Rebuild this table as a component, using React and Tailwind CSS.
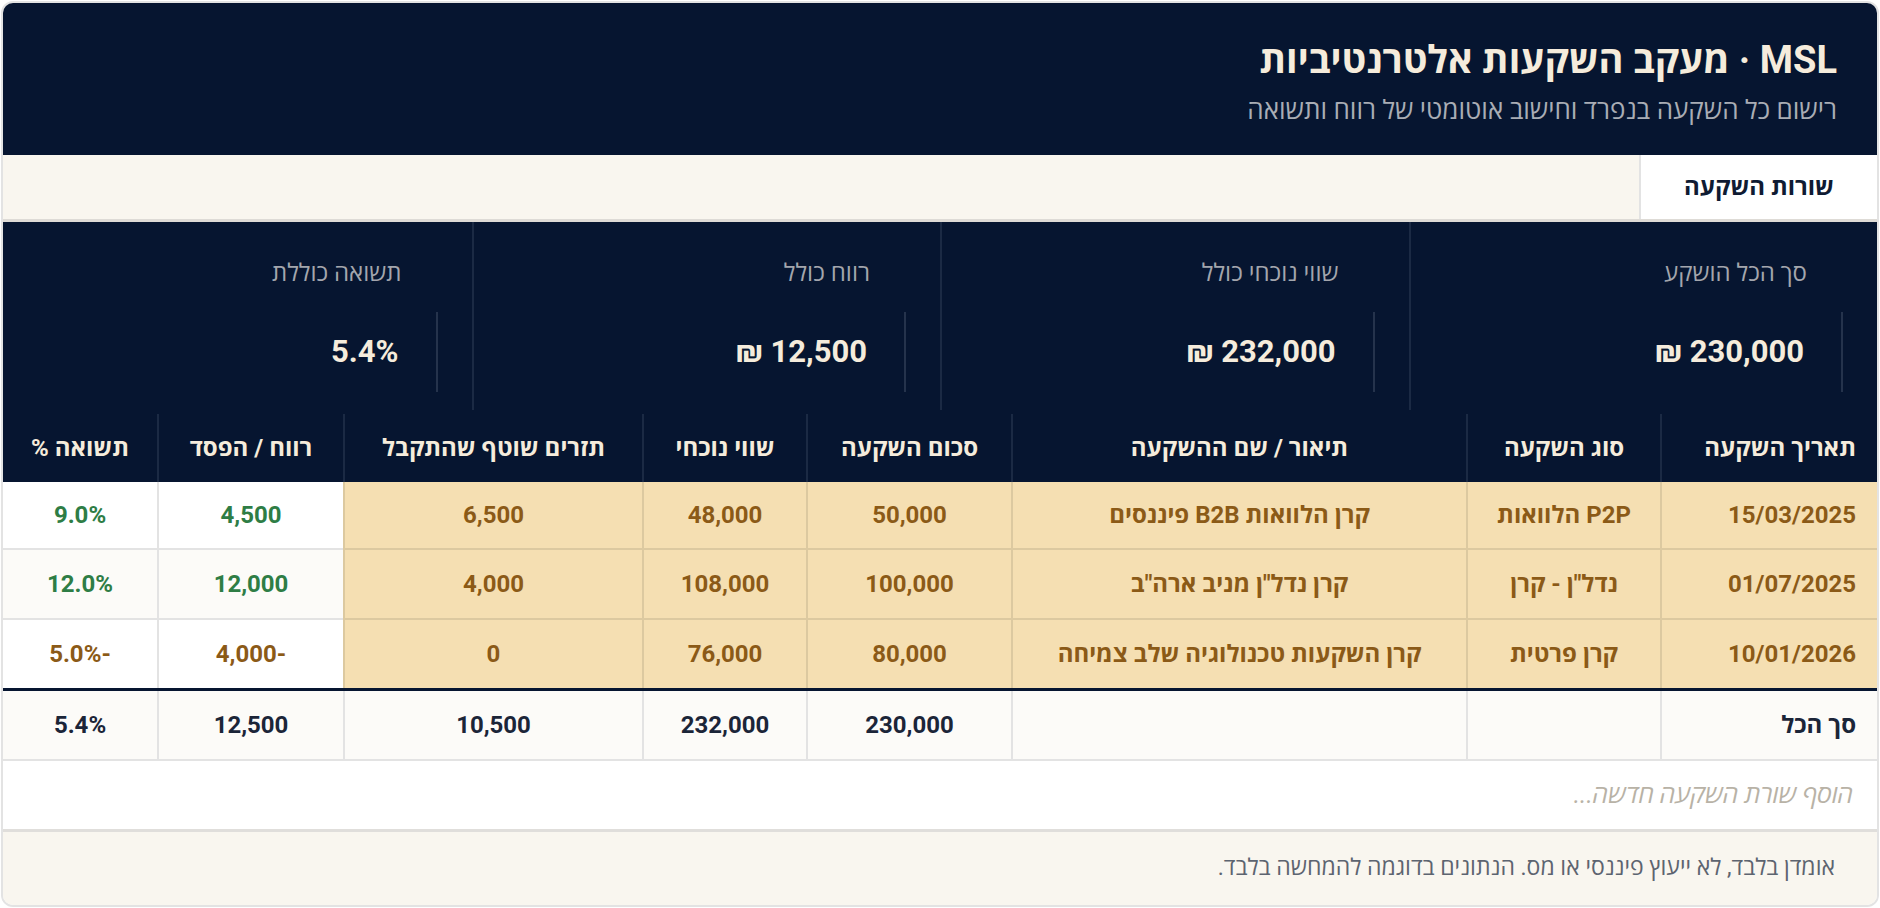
const font = { fontFamily: "Roboto, 'Open Sans', 'DejaVu Sans', sans-serif" };

const stats = [
  { label: 'סך הכל הושקע', value: '230,000 ₪' },
  { label: 'שווי נוכחי כולל', value: '232,000 ₪' },
  { label: 'רווח כולל', value: '12,500 ₪' },
  { label: 'תשואה כוללת', value: '5.4%' },
];

const headers = [
  'תאריך השקעה',
  'סוג השקעה',
  'תיאור / שם ההשקעה',
  'סכום השקעה',
  'שווי נוכחי',
  'תזרים שוטף שהתקבל',
  'רווח / הפסד',
  'תשואה %',
];

const rows = [
  { date: '15/03/2025', type: 'P2P הלוואות', name: 'קרן הלוואות B2B פיננסים', amount: '50,000', current: '48,000', flow: '6,500', profit: '4,500', ret: '9.0%', up: true },
  { date: '01/07/2025', type: 'נדל"ן - קרן', name: 'קרן נדל"ן מניב ארה"ב', amount: '100,000', current: '108,000', flow: '4,000', profit: '12,000', ret: '12.0%', up: true },
  { date: '10/01/2026', type: 'קרן פרטית', name: 'קרן השקעות טכנולוגיה שלב צמיחה', amount: '80,000', current: '76,000', flow: '0', profit: '-4,000', ret: '-5.0%', up: false },
];

const cols = 'grid grid-cols-[217px_194px_455px_205px_164px_299px_186px_154px]';

function Beige({ children, right, last }) {
  return (
    <div
      className={`flex items-center bg-[#f5dfb2] text-[#8b5a17] border-l-2 border-[#dcc9a0] ${last ? '' : 'border-b-2'} ${right ? 'justify-start pr-[21px]' : 'justify-center px-3'}`}
    >
      {children}
    </div>
  );
}

function Plain({ children, color, alt, last, end }) {
  return (
    <div
      className={`flex items-center justify-center px-3 ${alt ? 'bg-[#fcfbf8]' : 'bg-white'} ${end ? '' : 'border-l-2'} ${last ? '' : 'border-b-2'} border-[#e3e3e3] ${color}`}
    >
      {children}
    </div>
  );
}

export default function App() {
  return (
    <div dir="rtl" style={font} className="w-full h-[908px] bg-white p-px">
      <div className="h-full flex flex-col rounded-xl border-2 border-[#e3e3e3] overflow-hidden">
        <div className="h-[152px] shrink-0 bg-[#061530] pr-[40px] pt-[33px]">
          <h1 className="text-[38px] leading-[48px] font-bold text-[#f5ecdc]">MSL · מעקב השקעות אלטרנטיביות</h1>
          <p className="mt-[9px] text-[26px] leading-[34px] text-[#a9adb5]">רישום כל השקעה בנפרד וחישוב אוטומטי של רווח ותשואה</p>
        </div>

        <div className="h-[67px] shrink-0 flex bg-[#f9f6ef] border-b-[3px] border-[#dedbd6]">
          <div className="w-[238px] bg-white border-l-2 border-[#e3e3e3] flex items-center justify-center text-[24px] font-bold text-[#0f1b33]">
            שורות השקעה
          </div>
        </div>

        <div className="h-[188px] shrink-0 grid grid-cols-4 bg-[#061530]">
          {stats.map((s, i) => (
            <div key={s.label} className={`flex flex-col pt-[36px] ${i < 3 ? 'border-l-2 border-[#1b2a44]' : ''}`}>
              <div className="pr-[70px] text-[24px] leading-[30px] text-[#a3a6ad]">{s.label}</div>
              <div className="mt-[24px] mr-[34px] h-[80px] border-r-2 border-[#25334c] pr-[37px] flex items-center text-[31px] font-bold text-[#f5ecdc]">
                {s.value}
              </div>
            </div>
          ))}
        </div>

        <div className={`${cols} h-[72px] shrink-0 bg-[#061530] text-[24px] font-bold text-[#f5ecdc]`}>
          {headers.map((h, i) => (
            <div
              key={h}
              className={`flex items-center ${i === 0 ? 'justify-start pr-[21px]' : 'justify-center'} ${i < 7 ? 'border-l-2 border-[#1b2a44]' : ''} mt-[4px]`}
            >
              {h}
            </div>
          ))}
        </div>

        {rows.map((r, i) => {
          const last = i === rows.length - 1;
          const alt = i === 1;
          const tone = r.up ? 'text-[#2e7d45]' : 'text-[#8b5a17]';
          const h = i === 0 ? 'h-[68px]' : last ? 'h-[71px] border-b-[3px] border-[#061530]' : 'h-[70px]';
          return (
            <div key={r.date} className={`${cols} shrink-0 text-[24px] font-bold ${h}`}>
              <Beige right last={last}>{r.date}</Beige>
              <Beige last={last}>{r.type}</Beige>
              <Beige last={last}>{r.name}</Beige>
              <Beige last={last}>{r.amount}</Beige>
              <Beige last={last}>{r.current}</Beige>
              <Beige last={last}>{r.flow}</Beige>
              <Plain color={tone} alt={alt} last={last}>{r.profit}</Plain>
              <Plain color={tone} alt={alt} last={last} end>{r.ret}</Plain>
            </div>
          );
        })}

        <div className={`${cols} h-[70px] shrink-0 text-[24px] font-bold text-[#1b2538] bg-[#fcfbf8] border-b-2 border-[#e3e3e3]`}>
          <div className="flex items-center pr-[21px] border-l-2 border-[#e3e3e3]">סך הכל</div>
          <div className="border-l-2 border-[#e3e3e3]" />
          <div className="border-l-2 border-[#e3e3e3]" />
          <div className="flex items-center justify-center border-l-2 border-[#e3e3e3]">230,000</div>
          <div className="flex items-center justify-center border-l-2 border-[#e3e3e3]">232,000</div>
          <div className="flex items-center justify-center border-l-2 border-[#e3e3e3]">10,500</div>
          <div className="flex items-center justify-center border-l-2 border-[#e3e3e3]">12,500</div>
          <div className="flex items-center justify-center">5.4%</div>
        </div>

        <div className="h-[71px] shrink-0 flex items-center pr-[24px] bg-white border-b-[3px] border-[#e0dedb] text-[25px] italic text-[#b8b2a6]">
          הוסף שורת השקעה חדשה...
        </div>

        <div className="flex-1 flex items-center pr-[42px] bg-[#f9f6ef] text-[23px] text-[#5d6470]">
          אומדן בלבד, לא ייעוץ פיננסי או מס. הנתונים בדוגמה להמחשה בלבד.
        </div>
      </div>
    </div>
  );
}
